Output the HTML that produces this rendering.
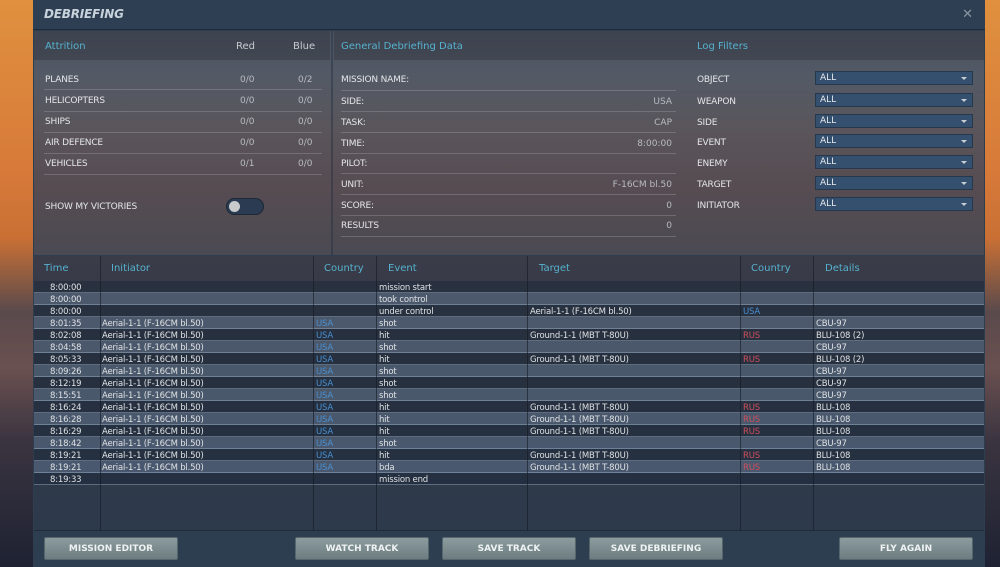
<!DOCTYPE html>
<html><head><meta charset="utf-8"><style>
*{margin:0;padding:0;box-sizing:border-box}
body{width:1000px;height:567px;overflow:hidden;font-family:"DejaVu Sans","Liberation Sans",sans-serif;font-size:9px;color:#dfe2e4;
background:linear-gradient(180deg,#e0903e 0%,#d77a3a 30%,#c97035 42%,#5a4a4c 55%,#6a5050 65%,#3a3440 78%,#1e2233 100%);position:relative}
.p{position:absolute}
#panel{left:33px;top:0;width:952px;height:567px;background:#2d3e51}
#hdr{left:33px;top:0;width:952px;height:30px;background:#2e3f54;border-bottom:1px solid #1f2b38}
#hdr b{position:absolute;left:11px;top:7px;font-size:12px;font-style:italic;font-weight:bold;color:#c9d3dc;letter-spacing:-.2px}
#x{position:absolute;right:12px;top:7px;color:#8a96a0;font-size:13px}
#top{left:34px;top:31px;width:950px;height:224px;background:linear-gradient(180deg,#4a5260 0%,#535a66 20%,#5a555a 45%,#564c52 70%,#4b4a52 100%)}
.band{position:absolute;top:31px;height:29px;background:rgba(40,40,48,.35)}
.ttl{color:#55b2cf;font-size:10px}
.lbl{font-size:9px;color:#e4e6e8;letter-spacing:-.2px}
.val{color:#b8bcc0;text-align:right}
.ln{position:absolute;height:1px;background:rgba(200,200,210,.25)}
.sel{position:absolute;left:815px;width:158px;height:14px;background:#35506e;border:1px solid #26384c;color:#e6e9ec;padding-left:4px;line-height:13px;font-size:9px}
.sel:after{content:"";position:absolute;right:5px;top:5px;border-left:3px solid transparent;border-right:3px solid transparent;border-top:3px solid #c7ced4}
#tbl{left:34px;top:256px;width:950px;height:274px;background:linear-gradient(180deg,#3a3c48 0%,#323845 40%,#2d3a4c 100%)}
.th{position:absolute;top:263px;color:#55b2cf;font-size:10px}
.vl{position:absolute;top:256px;height:274px;width:1px;background:rgba(20,25,35,.6)}
.row{position:absolute;left:34px;width:950px;height:12px;border-bottom:1px solid rgba(150,170,190,.5)}
.r0{background:rgba(30,42,58,.55)}
.r1{background:rgba(95,115,140,.55)}
.row span{position:absolute;top:1px;line-height:12px;white-space:nowrap;font-size:8.5px;letter-spacing:-.2px}
.usa{color:#4a8fd0}.rus{color:#d0505a}
.btn{position:absolute;top:537px;height:23px;background:linear-gradient(#8c9c9e,#6c7c80);border:1px solid #56666c;border-radius:2px;color:#eef2f2;font-weight:bold;font-size:9px;text-align:center;line-height:23px}
</style></head><body>
<div id="panel" class="p"></div>
<div id="hdr" class="p"><b>DEBRIEFING</b><span id="x">✕</span></div>
<div id="top" class="p"></div>
<div class="band" style="left:34px;width:296px"></div>
<div class="band" style="left:334px;width:346px"></div>
<div class="band" style="left:680px;width:304px"></div>
<div class="p" style="left:331px;top:31px;width:2px;height:224px;background:rgba(40,50,65,.5)"></div>

<div class="p ttl" style="left:45px;top:41px">Attrition</div>
<div class="p" style="left:236px;top:41px;color:#c8ccd0;font-size:10px">Red</div>
<div class="p" style="left:293px;top:41px;color:#c8ccd0;font-size:10px">Blue</div>
<div class="p lbl" style="left:45px;top:75px">PLANES</div><div class="p val" style="left:240px;top:75px">0/0</div><div class="p val" style="left:298px;top:75px">0/2</div>
<div class="ln" style="left:44px;top:89px;width:278px"></div>
<div class="p lbl" style="left:45px;top:96px">HELICOPTERS</div><div class="p val" style="left:240px;top:96px">0/0</div><div class="p val" style="left:298px;top:96px">0/0</div>
<div class="ln" style="left:44px;top:111px;width:278px"></div>
<div class="p lbl" style="left:45px;top:117px">SHIPS</div><div class="p val" style="left:240px;top:117px">0/0</div><div class="p val" style="left:298px;top:117px">0/0</div>
<div class="ln" style="left:44px;top:132px;width:278px"></div>
<div class="p lbl" style="left:45px;top:138px">AIR DEFENCE</div><div class="p val" style="left:240px;top:138px">0/0</div><div class="p val" style="left:298px;top:138px">0/0</div>
<div class="ln" style="left:44px;top:153px;width:278px"></div>
<div class="p lbl" style="left:45px;top:159px">VEHICLES</div><div class="p val" style="left:240px;top:159px">0/1</div><div class="p val" style="left:298px;top:159px">0/0</div>
<div class="ln" style="left:44px;top:174px;width:278px"></div>
<div class="p lbl" style="left:45px;top:202px">SHOW MY VICTORIES</div>
<div class="p" style="left:226px;top:198px;width:38px;height:17px;border-radius:9px;background:#2b3c52;border:1px solid #1d2838"></div>
<div class="p" style="left:229px;top:201px;width:11px;height:11px;border-radius:6px;background:#c8cacc"></div>

<div class="p ttl" style="left:341px;top:41px">General Debriefing Data</div>
<div class="p lbl" style="left:341px;top:75px">MISSION NAME:</div>
<div class="ln" style="left:341px;top:90px;width:335px"></div>
<div class="p lbl" style="left:341px;top:97px">SIDE:</div><div class="p val" style="left:600px;width:72px;top:97px">USA</div>
<div class="ln" style="left:341px;top:111px;width:335px"></div>
<div class="p lbl" style="left:341px;top:118px">TASK:</div><div class="p val" style="left:600px;width:72px;top:118px">CAP</div>
<div class="ln" style="left:341px;top:132px;width:335px"></div>
<div class="p lbl" style="left:341px;top:139px">TIME:</div><div class="p val" style="left:600px;width:72px;top:139px">8:00:00</div>
<div class="ln" style="left:341px;top:153px;width:335px"></div>
<div class="p lbl" style="left:341px;top:159px">PILOT:</div>
<div class="ln" style="left:341px;top:173px;width:335px"></div>
<div class="p lbl" style="left:341px;top:180px">UNIT:</div><div class="p val" style="left:580px;width:92px;top:180px">F-16CM bl.50</div>
<div class="ln" style="left:341px;top:194px;width:335px"></div>
<div class="p lbl" style="left:341px;top:201px">SCORE:</div><div class="p val" style="left:600px;width:72px;top:201px">0</div>
<div class="ln" style="left:341px;top:215px;width:335px"></div>
<div class="p lbl" style="left:341px;top:221px">RESULTS</div><div class="p val" style="left:600px;width:72px;top:221px">0</div>
<div class="ln" style="left:341px;top:236px;width:335px"></div>

<div class="p ttl" style="left:697px;top:41px">Log Filters</div>
<div class="p lbl" style="left:697px;top:75px">OBJECT</div><div class="sel" style="top:71px">ALL</div>
<div class="p lbl" style="left:697px;top:97px">WEAPON</div><div class="sel" style="top:93px">ALL</div>
<div class="p lbl" style="left:697px;top:118px">SIDE</div><div class="sel" style="top:114px">ALL</div>
<div class="p lbl" style="left:697px;top:138px">EVENT</div><div class="sel" style="top:134px">ALL</div>
<div class="p lbl" style="left:697px;top:159px">ENEMY</div><div class="sel" style="top:155px">ALL</div>
<div class="p lbl" style="left:697px;top:180px">TARGET</div><div class="sel" style="top:176px">ALL</div>
<div class="p lbl" style="left:697px;top:201px">INITIATOR</div><div class="sel" style="top:197px">ALL</div>

<div id="tbl" class="p"></div>
<div class="th" style="left:44px">Time</div>
<div class="th" style="left:111px">Initiator</div>
<div class="th" style="left:324px">Country</div>
<div class="th" style="left:388px">Event</div>
<div class="th" style="left:539px">Target</div>
<div class="th" style="left:751px">Country</div>
<div class="th" style="left:825px">Details</div>

<div id="rows"></div>
<script>
var d=[["8:00:00","","","mission start","","",""],
["8:00:00","","","took control","","",""],
["8:00:00","","","under control","Aerial-1-1 (F-16CM bl.50)","USA",""],
["8:01:35","A","USA","shot","","","CBU-97"],
["8:02:08","A","USA","hit","Ground-1-1 (MBT T-80U)","RUS","BLU-108 (2)"],
["8:04:58","A","USA","shot","","","CBU-97"],
["8:05:33","A","USA","hit","Ground-1-1 (MBT T-80U)","RUS","BLU-108 (2)"],
["8:09:26","A","USA","shot","","","CBU-97"],
["8:12:19","A","USA","shot","","","CBU-97"],
["8:15:51","A","USA","shot","","","CBU-97"],
["8:16:24","A","USA","hit","Ground-1-1 (MBT T-80U)","RUS","BLU-108"],
["8:16:28","A","USA","hit","Ground-1-1 (MBT T-80U)","RUS","BLU-108"],
["8:16:29","A","USA","hit","Ground-1-1 (MBT T-80U)","RUS","BLU-108"],
["8:18:42","A","USA","shot","","","CBU-97"],
["8:19:21","A","USA","hit","Ground-1-1 (MBT T-80U)","RUS","BLU-108"],
["8:19:21","A","USA","bda","Ground-1-1 (MBT T-80U)","RUS","BLU-108"],
["8:19:33","","","mission end","","",""]];
var h="";
d.forEach(function(r,i){
var top=281+i*12;
h+='<div class="row '+(i%2?'r1':'r0')+'" style="top:'+top+'px">'+
'<span style="left:16px">'+r[0]+'</span>'+
'<span style="left:68px">'+(r[1]?'Aerial-1-1 (F-16CM bl.50)':'')+'</span>'+
'<span class="usa" style="left:282px">'+r[2]+'</span>'+
'<span style="left:345px">'+r[3]+'</span>'+
'<span style="left:496px">'+r[4]+'</span>'+
'<span class="'+(r[5]=='USA'?'usa':'rus')+'" style="left:709px">'+r[5]+'</span>'+
'<span style="left:782px">'+r[6]+'</span></div>';});
document.getElementById("rows").innerHTML=h;
</script>
<div class="vl" style="left:100px"></div>
<div class="vl" style="left:313px"></div>
<div class="vl" style="left:376px"></div>
<div class="vl" style="left:527px"></div>
<div class="vl" style="left:740px"></div>
<div class="vl" style="left:813px"></div>
<div class="p" style="left:34px;top:530px;width:950px;height:1px;background:#1f2b38"></div>

<div class="btn" style="left:44px;width:134px">MISSION EDITOR</div>
<div class="btn" style="left:295px;width:134px">WATCH TRACK</div>
<div class="btn" style="left:442px;width:134px">SAVE TRACK</div>
<div class="btn" style="left:589px;width:134px">SAVE DEBRIEFING</div>
<div class="btn" style="left:839px;width:134px">FLY AGAIN</div>
</body></html>
